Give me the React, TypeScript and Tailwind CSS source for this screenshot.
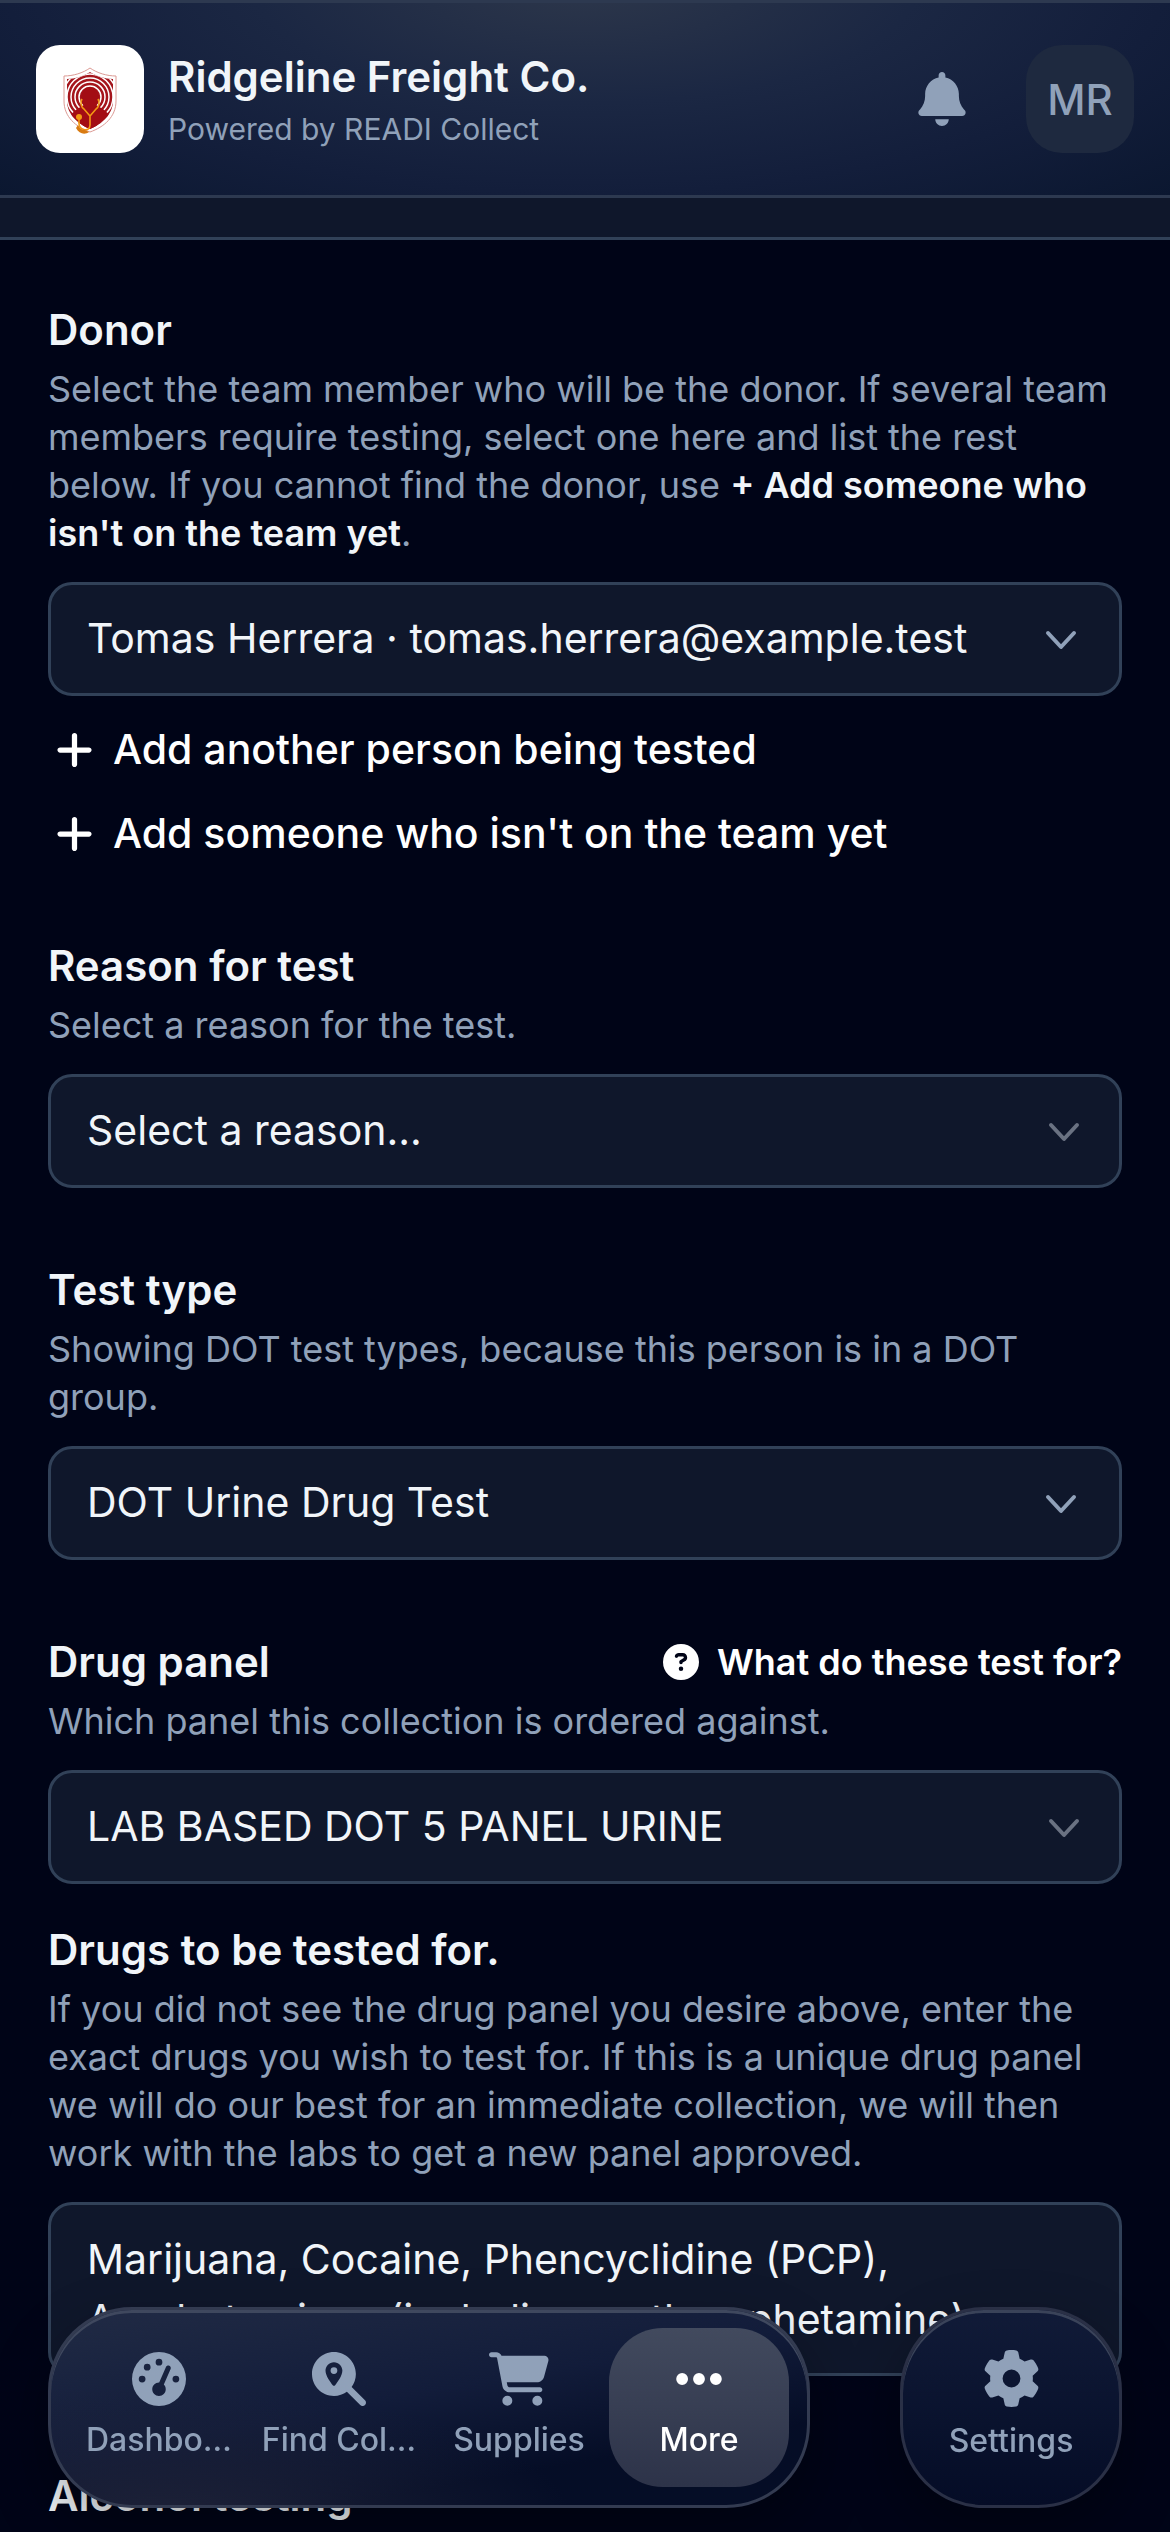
import { useState } from "react"
import type { ReactNode } from "react"
import {
  FaBell,
  FaCartShopping,
  FaCircleQuestion,
  FaEllipsis,
  FaGaugeHigh,
  FaGear,
  FaMagnifyingGlassLocation,
  FaPlus,
} from "react-icons/fa6"

interface SectionProps {
  id: string
  title: string
  hint?: ReactNode
  action?: ReactNode
  children?: ReactNode
}

interface SelectFieldProps {
  id: string
  value: string
  options: string[]
  muted?: boolean
  onChange: (value: string) => void
}

const navItems = [
  { label: "Dashbo…", name: "Dashboard", icon: FaGaugeHigh },
  { label: "Find Col…", name: "Find Collector", icon: FaMagnifyingGlassLocation },
  { label: "Supplies", name: "Supplies", icon: FaCartShopping },
  { label: "More", name: "More", icon: FaEllipsis, active: true },
]

function ShieldLogo() {
  return (
    <svg viewBox="0 0 54 72" className="h-[72px] w-[54px]" aria-hidden="true">
      <defs>
        <clipPath id="shield">
          <path d="M27 9 C33 13 42 16 50 16 V38 C50 51 39 61 27 66 C15 61 4 51 4 38 V16 C12 16 21 13 27 9Z" />
        </clipPath>
      </defs>
      <path
        d="M27 5 C34 10 44 13 53 13 V38 C53 54 41 64 27 69 C13 64 1 54 1 38 V13 C10 13 20 10 27 5Z"
        fill="#fff"
        stroke="#dc9a94"
        strokeWidth="1"
      />
      <g clipPath="url(#shield)">
        <rect width="54" height="72" fill="#a5151c" />
        {[11, 15, 19, 23, 27].map((r) => (
          <circle key={r} cx="27" cy="34" r={r} fill="none" stroke="#fff" strokeWidth="1.5" />
        ))}
        <path d="M5 60 C7 49 14 46 21 42 H33 C40 46 47 49 49 60 L40 72 H12Z" fill="#a30d14" />
        <ellipse cx="27" cy="35" rx="9" ry="11" fill="#a30d14" />
      </g>
      <path
        d="M19 36 C17 39 18 44 21 46 L27 53 L33 46 C36 44 37 39 35 36 M27 53 V62 C27 69 17 68 16 61 V54"
        fill="none"
        stroke="#f39a13"
        strokeWidth="1.6"
      />
      <path d="M13 65 C16 71 22 72 26 69 L22 67 C19 67 16 65 15 62Z" fill="#d97b12" />
      <circle cx="16" cy="54" r="3" fill="#f39a13" />
    </svg>
  )
}

function Section({ id, title, hint, action, children }: SectionProps) {
  return (
    <section>
      <div className="mb-[5px] flex items-center justify-between">
        <label htmlFor={id} className="text-[42px] leading-[60px] font-semibold text-slate-100">
          {title}
        </label>
        {action}
      </div>
      {hint && <p className="text-[36px] leading-[48px] text-slate-400">{hint}</p>}
      {children}
    </section>
  )
}

function SelectField({ id, value, options, muted, onChange }: SelectFieldProps) {
  return (
    <div className="relative mt-[25px]">
      <select
        id={id}
        value={value}
        onChange={(e) => onChange(e.target.value)}
        className="block h-[114px] w-full appearance-none rounded-3xl border-[3px] border-slate-700 bg-slate-900 pr-24 pl-9 text-[41px] text-slate-100"
      >
        {options.map((option) => (
          <option key={option}>{option}</option>
        ))}
      </select>
      <svg
        viewBox="0 0 32 20"
        aria-hidden="true"
        className={
          muted
            ? "pointer-events-none absolute top-12 right-[42px] h-5 w-8 text-gray-500"
            : "pointer-events-none absolute top-12 right-[45px] h-5 w-8 text-slate-400"
        }
      >
        <path
          d="M3 3 L16 17 L29 3"
          fill="none"
          stroke="currentColor"
          strokeWidth="4"
          strokeLinecap="round"
          strokeLinejoin="round"
        />
      </svg>
    </div>
  )
}

function AddButton({ children }: { children: ReactNode }) {
  return (
    <button type="button" className="flex h-[84px] items-center gap-5 pl-2 text-[41px] font-medium text-white">
      <FaPlus className="h-[42px] w-[37px]" />
      {children}
    </button>
  )
}

export default function App() {
  const [donor, setDonor] = useState("Tomas Herrera · tomas.herrera@example.test")
  const [reason, setReason] = useState("Select a reason...")
  const [testType, setTestType] = useState("DOT Urine Drug Test")
  const [panel, setPanel] = useState("LAB BASED DOT 5 PANEL URINE")
  const [drugs, setDrugs] = useState(
    "Marijuana, Cocaine, Phencyclidine (PCP),\nAmphetamines (including methamphetamine)"
  )

  return (
    <div className="min-h-screen bg-[#000417] font-['Inter',sans-serif] text-slate-100">
      {/* Header */}
      <header className="border-y-[3px] border-[#2d3950] bg-[radial-gradient(ellipse_at_50%_-10%,#2d374b_0%,#1b2743_40%,#131e3b_70%,#0b1730_100%)]">
        <div className="flex h-48 items-center justify-between px-9">
          <div className="flex items-center gap-6">
            <div className="flex size-[108px] items-center justify-center rounded-3xl bg-white">
              <ShieldLogo />
            </div>
            <div className="pt-1.5">
              <h1 className="text-[42px] leading-[54px] font-semibold">Ridgeline Freight Co.</h1>
              <p className="text-[30px] leading-[51px] text-slate-400">Powered by READI Collect</p>
            </div>
          </div>
          <div className="flex items-center gap-[60px]">
            <button type="button" aria-label="Notifications" className="text-slate-400">
              <FaBell className="h-[54px] w-12" />
            </button>
            <button
              type="button"
              className="size-[108px] rounded-[36px] bg-[#1e293f] text-[42px] font-medium text-slate-400"
            >
              MR
            </button>
          </div>
        </div>
      </header>
      <div className="h-[42px] border-b-[3px] border-slate-700 bg-slate-900" />

      {/* Order form */}
      <main className="px-12 pt-[60px]">
        <form>
          <Section
            id="donor"
            title="Donor"
            hint={
              <>
                Select the team member who will be the donor. If several team members require testing, select one here
                and list the rest below. If you cannot find the donor, use{" "}
                <strong className="font-semibold text-slate-100">+ Add someone who isn't on the team yet</strong>.
              </>
            }
          >
            <SelectField
              id="donor"
              value={donor}
              onChange={setDonor}
              options={["Tomas Herrera · tomas.herrera@example.test"]}
            />
            <div className="mt-3 mb-[60px]">
              <AddButton>Add another person being tested</AddButton>
              <AddButton>Add someone who isn't on the team yet</AddButton>
            </div>
          </Section>

          <div className="flex flex-col gap-[72px]">
            <Section id="reason" title="Reason for test" hint="Select a reason for the test.">
              <SelectField id="reason" value={reason} onChange={setReason} options={["Select a reason..."]} muted />
            </Section>

            <Section
              id="test-type"
              title="Test type"
              hint="Showing DOT test types, because this person is in a DOT group."
            >
              <SelectField id="test-type" value={testType} onChange={setTestType} options={["DOT Urine Drug Test"]} />
            </Section>

            <Section
              id="panel"
              title="Drug panel"
              hint="Which panel this collection is ordered against."
              action={
                <button type="button" className="flex items-center gap-[18px] text-[36px] font-semibold text-white">
                  <FaCircleQuestion className="size-9" />
                  What do these test for?
                </button>
              }
            >
              <SelectField id="panel" value={panel} onChange={setPanel} options={["LAB BASED DOT 5 PANEL URINE"]} muted />
            </Section>
          </div>

          <div className="mt-9">
            <Section
              id="drugs"
              title="Drugs to be tested for."
              hint="If you did not see the drug panel you desire above, enter the exact drugs you wish to test for. If this is a unique drug panel we will do our best for an immediate collection, we will then work with the labs to get a new panel approved."
            >
              <textarea
                id="drugs"
                rows={2}
                value={drugs}
                onChange={(e) => setDrugs(e.target.value)}
                className="mt-[25px] block w-full resize-none overflow-hidden rounded-3xl border-[3px] border-slate-700 bg-slate-900 px-9 py-6 text-[41px] leading-[60px] text-slate-100"
              />
            </Section>
          </div>

          <h2 className="mt-[90px] text-[42px] leading-[60px] font-semibold text-slate-100">Alcohol testing</h2>
        </form>
      </main>

      {/* Bottom dock */}
      <nav className="fixed inset-x-12 bottom-6 flex justify-between">
        <div className="flex rounded-[84px] border-[3px] border-[#333b51] bg-[radial-gradient(ellipse_at_15%_110%,#1e2238_0%,transparent_45%),linear-gradient(170deg,#212b45_0%,#121c3a_45%,#050d26_75%)] p-[18px] shadow-[inset_0_3px_0_#3f485e,0_24px_60px_rgba(0,0,0,0.3)]">
          {navItems.map(({ label, name, icon: Icon, active }) => (
            <button
              key={name}
              type="button"
              aria-label={name}
              className={
                active
                  ? "flex h-[159px] w-[180px] flex-col items-center rounded-[54px] bg-linear-to-b from-[#424a5e] to-[#2d3349] pt-6 text-[32px] font-medium text-white"
                  : "flex h-[159px] w-[180px] flex-col items-center pt-6 text-[32px] font-medium text-slate-400"
              }
            >
              <Icon className="h-[54px] w-[60px]" />
              <span className="mt-2.5 leading-[48px]">{label}</span>
            </button>
          ))}
        </div>
        <button
          type="button"
          className="flex w-[222px] flex-col items-center rounded-[84px] border-[3px] border-[#2a3046] bg-linear-to-b from-[#111b38] to-[#050c26] pt-10 text-[32px] font-medium text-slate-400 shadow-[inset_0_3px_0_#3a4359,0_24px_60px_rgba(0,0,0,0.3)]"
        >
          <FaGear className="size-[57px]" />
          <span className="mt-2.5 leading-[48px]">Settings</span>
        </button>
      </nav>
    </div>
  )
}
